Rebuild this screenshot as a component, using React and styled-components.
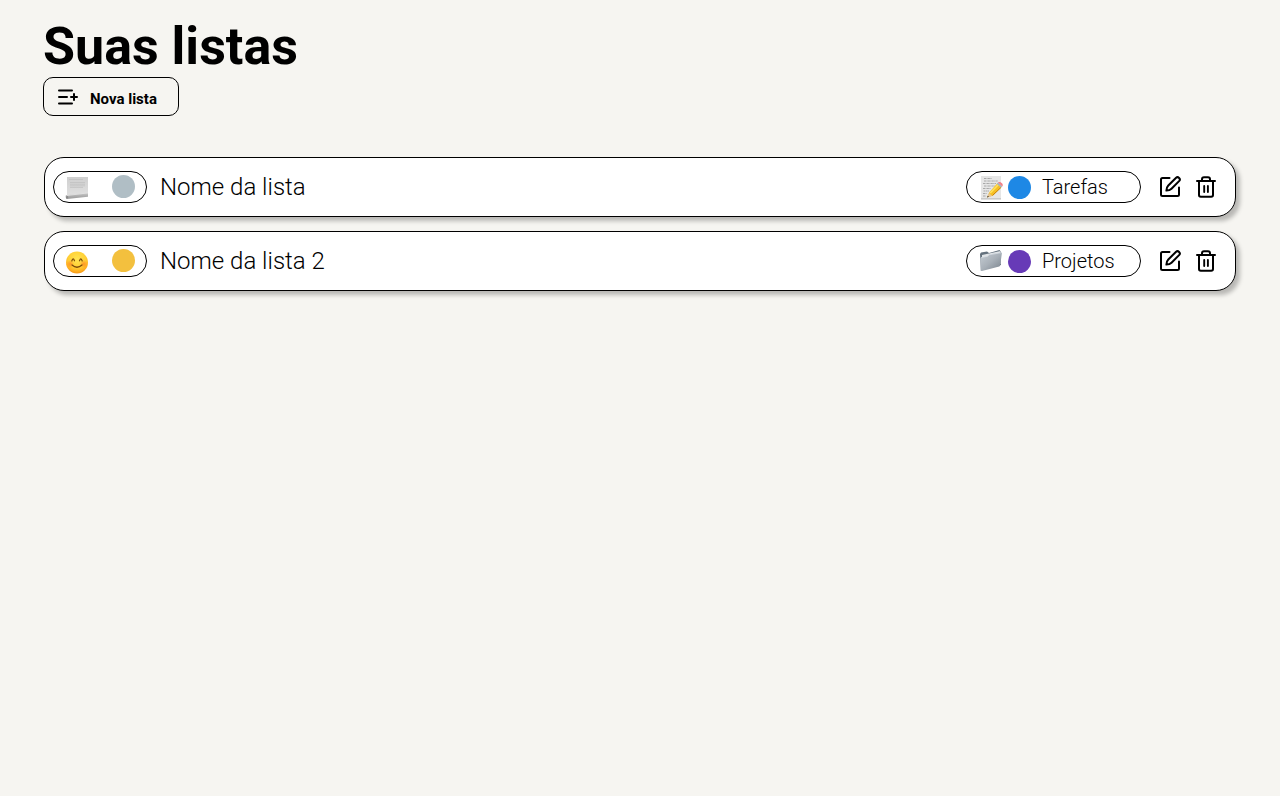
import React from "react";
import styled, { createGlobalStyle } from "styled-components";

const GlobalStyle = createGlobalStyle`
  * { box-sizing: border-box; }
  body { margin: 0; background: #f6f5f1; color: #000; font-family: Roboto, "Liberation Sans", sans-serif; }
`;

const Page = styled.main`
  min-height: 100vh;
  padding: 17px 44px 0;
  background: #f6f5f1;
`;

const Title = styled.h1`
  margin: 0 0 0 -1px;
  font-size: 52px;
  line-height: 60px;
  font-weight: 700;
`;

const NewListButton = styled.button`
  display: flex;
  align-items: center;
  gap: 12px;
  width: 136px;
  height: 39px;
  margin: 0 0 0 -1px;
  padding: 1px 0 0 14px;
  border: 1px solid #000;
  border-radius: 10px;
  background: transparent;
  color: #000;
  font: 700 15px Roboto, "Liberation Sans", sans-serif;
  white-space: nowrap;

  svg { margin-top: -1px; }
  span { padding-top: 3px; }
`;

const Lists = styled.section`
  display: flex;
  flex-direction: column;
  gap: 14px;
  margin-top: 41px;
`;

const Card = styled.article`
  display: flex;
  align-items: center;
  height: 60px;
  padding: 0 17px 0 8px;
  border: 1px solid #000;
  border-radius: 20px;
  background: #fff;
  box-shadow: 4px 4px 4px rgba(0, 0, 0, 0.25);
`;

const Pill = styled.div`
  display: flex;
  align-items: center;
  flex: none;
  width: ${(p) => p.$width}px;
  height: 32px;
  padding: 0 11px;
  border: 1px solid #000;
  border-radius: 16px;
`;

const Dot = styled.span`
  flex: none;
  width: 23px;
  height: 23px;
  border-radius: 50%;
  background: ${(p) => p.$color};
`;

const IconPill = styled(Pill)`
  justify-content: space-between;
  ${Dot} { margin-bottom: 1px; }
`;

const Name = styled.h2`
  flex: 1;
  margin: 0 0 0 13px;
  font-size: 24px;
  line-height: 28px;
  font-weight: 300;
`;

const Category = styled.span`
  margin-left: 11px;
  font-size: 20px;
  line-height: 24px;
  font-weight: 300;
`;

const CategoryPill = styled(Pill)`
  ${Dot} { margin: 1px 0 0 5px; }
`;

const Actions = styled.div`
  display: flex;
  gap: 12px;
  margin-left: 17px;
`;

const IconButton = styled.button`
  display: flex;
  padding: 0;
  border: 0;
  background: none;
  color: #000;
`;

const Drawing = styled.svg`
  display: block;
  flex: none;
  overflow: visible;
`;

const Stroke = ({ size = 24, children }) => (
  <Drawing width={size} height={size} viewBox="0 0 24 24" fill="none" stroke="currentColor" strokeWidth="2" strokeLinecap="round" strokeLinejoin="round">
    {children}
  </Drawing>
);

const AddListIcon = () => (
  <Drawing width="20" height="16" viewBox="0 0 20 16" fill="none" stroke="currentColor" strokeWidth="2" strokeLinecap="round">
    <path d="M1 1.500H14M1 8H9M1 14.500H14M13 8H19M16 5V11" />
  </Drawing>
);

const EditIcon = () => (
  <Stroke>
    <path d="M11.500 3H4.500Q3 3 3 4.500V19.500Q3 21 4.500 21H19.500Q21 21 21 19.500V12.500" />
    <path d="M8.400 15.600c.1-2.400.6-3.800 1.900-5.100L18.100 2.700c1.900-1.700 5 1.200 3.200 3.200L13.500 13.700c-1.300 1.300-2.700 1.800-5.100 1.900Z" />
  </Stroke>
);

const TrashIcon = () => (
  <Stroke>
    <path d="M3 6H21M8 6V4.300C8 3 8.700 2.200 10 2.200H14C15.300 2.200 16 3 16 4.300V6M5 6V20Q5 21.700 6.800 21.700H17.200Q19 21.700 19 20V6" />
    <path d="M10.200 10.900V17.100M13.900 10.900V17.100" strokeWidth="1.900" />
  </Stroke>
);

const ScrollPage = () => (
  <Drawing width="24" height="24" viewBox="0 0 24 24">
    <defs>
      <linearGradient id="sheet" x2="0" y2="1">
        <stop stopColor="#cfcfcf" /><stop offset="1" stopColor="#e0e0e0" />
      </linearGradient>
      <linearGradient id="roll" x2="0" y2="1">
        <stop stopColor="#cfcfcf" /><stop offset=".5" stopColor="#b0b0b0" /><stop offset="1" stopColor="#999" />
      </linearGradient>
    </defs>
    <path d="M2 2H23V19L2 21Z" fill="url(#sheet)" />
    <path d="M4 4.500H18M5 7.500H20M5 9.200H20M5 10.800H20M5 12.400H18" stroke="#bebebe" strokeWidth=".7" />
    <path d="M1 20.200L23 17.500V21.800L2 24C.7 24 .3 20.800 1 20.200Z" fill="url(#roll)" />
    <path d="M2 20.500L23 17.900" stroke="#ededed" strokeWidth=".7" />
    <ellipse cx="2.100" cy="22.200" rx="1" ry="1.200" fill="#888" />
  </Drawing>
);

const Smile = () => (
  <Drawing width="24" height="24" viewBox="0 0 24 24">
    <defs>
      <radialGradient id="face" cx=".5" cy=".34" r=".66">
        <stop stopColor="#ffe451" /><stop offset=".6" stopColor="#ffcf35" /><stop offset=".85" stopColor="#ffb021" /><stop offset="1" stopColor="#f59516" />
      </radialGradient>
      <radialGradient id="blush">
        <stop stopColor="#ff641c" stopOpacity=".55" /><stop offset="1" stopColor="#ff641c" stopOpacity="0" />
      </radialGradient>
    </defs>
    <circle cx="12" cy="13.500" r="11" fill="url(#face)" />
    <circle cx="5.300" cy="15" r="4" fill="url(#blush)" />
    <circle cx="18.700" cy="15" r="4" fill="url(#blush)" />
    <path d="M6.800 12Q8 8 9.500 11.800M14.500 11.800Q16 8 17.200 12M7 16Q12 20.500 17 16" fill="none" stroke="#7d4a0a" strokeWidth="1.200" strokeLinecap="round" />
  </Drawing>
);

const Memo = () => (
  <Drawing width="25" height="24" viewBox="0 0 25 24">
    <path d="M3 1H23V24.500H3Z" fill="#e6e6e6" />
    <path d="M3 23H23V24.500H3Z" fill="#cacaca" />
    <path d="M6 3.500H14M6 6H20M5 8.500H18M6 11H17M5 13.500H13M5.500 16H11M5 18.500H9M5 21H8" stroke="#999" strokeWidth=".8" strokeDasharray="2 .5 1 .4" />
    <path d="M9 22.500L11.500 17L19.200 8.500L23.300 12.500L15 20.500Z" fill="#f6bf24" />
    <path d="M12.200 18L20.500 9.500" stroke="#ffe25b" strokeWidth="1.600" />
    <path d="M14.500 20.500L23 12.400" stroke="#c9810a" strokeWidth="1" />
    <path d="M9 22.500L11 17.900L14.200 21Z" fill="#e9c693" />
    <path d="M9 22.500L9.800 20.700L11 21.800Z" fill="#333" />
    <path d="M18.800 8.800L20 7.600L24.200 11.500L23 12.800Z" fill="#a6b4bd" />
    <path d="M20 7.600C21.800 5.800 26.500 9 24.200 11.500Z" fill="#f18189" />
  </Drawing>
);

const Folder = () => (
  <Drawing width="25" height="24" viewBox="0 0 25 24">
    <defs>
      <linearGradient id="folder" x2="1" y2="1">
        <stop stopColor="#c7ced5" /><stop offset=".5" stopColor="#a8b0b8" /><stop offset="1" stopColor="#77818b" />
      </linearGradient>
    </defs>
    <path d="M2 5L3 3.500L9 2.500L11 4L21.500 1L23 2.800V16L3 21.500Z" fill="#64717d" />
    <path d="M4 6L22.500 2V15L4 20Z" fill="#e0e4e7" />
    <path d="M3 8.500L9.600 7.200L11 5.600L23.200 3.500C23.700 3.400 24 3.700 23.900 4.200L22.200 16.200C22.100 16.900 21.700 17.200 21.200 17.400L4 22C3.200 22.200 2.600 21.900 2.600 21.200L2.300 9.500Z" fill="url(#folder)" />
    <path d="M3 8.600L9.800 7.200L11.200 5.800L23.500 3.700" fill="none" stroke="#dce3e9" strokeWidth=".6" />
  </Drawing>
);

const lists = [
  { name: "Nome da lista", color: "#b0bec5", Icon: ScrollPage, category: "Tarefas", categoryColor: "#1e88e5", CategoryIcon: Memo },
  { name: "Nome da lista 2", color: "#f3c03e", Icon: Smile, category: "Projetos", categoryColor: "#673ab7", CategoryIcon: Folder },
];

const ListCard = ({ list }) => {
  const { Icon, CategoryIcon } = list;
  return (
    <Card>
      <IconPill $width={94}>
        <Icon />
        <Dot $color={list.color} />
      </IconPill>
      <Name>{list.name}</Name>
      <CategoryPill $width={175}>
        <CategoryIcon />
        <Dot $color={list.categoryColor} />
        <Category>{list.category}</Category>
      </CategoryPill>
      <Actions>
        <IconButton aria-label="Editar"><EditIcon /></IconButton>
        <IconButton aria-label="Excluir"><TrashIcon /></IconButton>
      </Actions>
    </Card>
  );
};

export default function App() {
  return (
    <>
      <GlobalStyle />
      <Page>
        <Title>Suas listas</Title>
        <NewListButton>
          <AddListIcon />
          <span>Nova lista</span>
        </NewListButton>
        <Lists>
          {lists.map((list) => <ListCard key={list.name} list={list} />)}
        </Lists>
      </Page>
    </>
  );
}
